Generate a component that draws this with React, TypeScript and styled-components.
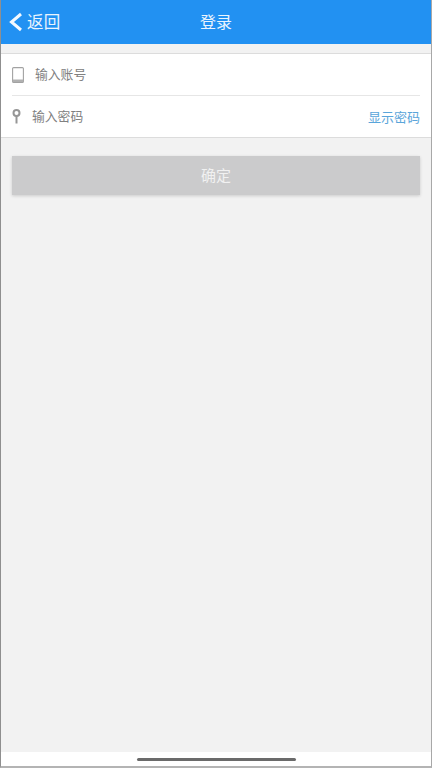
import React from "react";
import styled, { createGlobalStyle } from "styled-components";

const Global = createGlobalStyle`
  html, body { margin: 0; padding: 0; background: #fff; }
  #root { width: 432px; height: 768px; }
  * { box-sizing: border-box; }
`;

const Screen = styled.div`
  width: 432px;
  height: 768px;
  display: flex;
  flex-direction: column;
  overflow: hidden;
  background: #f2f2f2;
  border-left: 1px solid #8f8f8f;
  border-right: 1px solid #a8a8a8;
  border-bottom: 2px solid #b4b4b4;
  font-family: "Noto Sans CJK SC", "Liberation Sans", sans-serif;
`;

const Header = styled.header`
  height: 44px;
  flex: none;
  display: grid;
  grid-template-columns: 1fr auto 1fr;
  align-items: center;
  background: #2291f2;
  color: #eaf4fe;
  padding: 0 7px;
`;

const Back = styled.div`
  display: flex;
  align-items: center;
  gap: 3px;
  font-size: 16.5px;
  letter-spacing: 0.2px;
  line-height: 1;
`;

const BackLabel = styled.span`
  padding-bottom: 2px;
`;

const Title = styled.div`
  font-size: 16px;
  line-height: 1;
  padding-bottom: 2px;
`;

const Panel = styled.section`
  margin-top: 9px;
  flex: none;
  height: 85px;
  background: #fff;
  border-top: 1px solid #dcdcdc;
  border-bottom: 1px solid #dcdcdc;
  padding: 0 11px;
  display: flex;
  flex-direction: column;
`;

const Row = styled.div<{ $divided?: boolean; $gap: number }>`
  height: ${(p) => (p.$divided ? 42 : 41)}px;
  flex: none;
  display: flex;
  align-items: center;
  gap: ${(p) => p.$gap}px;
  border-bottom: ${(p) => (p.$divided ? "1px solid #e6e6e6" : "none")};
`;

const Placeholder = styled.span`
  font-size: 12.8px;
  color: #808080;
  flex: 1;
  line-height: 1;
  padding-bottom: 1px;
`;

const ShowLink = styled.span`
  font-size: 13px;
  color: #5aa5da;
  line-height: 1;
  padding-bottom: 1px;
`;

const Confirm = styled.div`
  margin: 18px 11px 0;
  height: 39px;
  flex: none;
  display: flex;
  align-items: center;
  justify-content: center;
  background: #cbcbcc;
  box-shadow: 0 1px 3px rgba(0, 0, 0, 0.16);
  color: #f1f1f1;
  font-size: 15px;
  line-height: 1;
  padding-bottom: 3px;
`;

const Spacer = styled.div`
  flex: 1;
`;

const HomeArea = styled.footer`
  height: 14px;
  flex: none;
  background: #fff;
  display: flex;
  justify-content: center;
  padding-top: 6px;
`;

const HomeBar = styled.div`
  width: 159px;
  height: 3px;
  border-radius: 2px;
  background: #6a6a6a;
`;

const App = () => (
  <>
    <Global />
    <Screen>
      <Header>
        <Back>
          <svg width="16" height="20" viewBox="0 0 16 20" fill="none">
            <path d="M13 2 L3.5 10 L13 18" stroke="#f4f9ff" strokeWidth="3" />
          </svg>
          <BackLabel>返回</BackLabel>
        </Back>
        <Title>登录</Title>
      </Header>
      <Panel>
        <Row $divided $gap={11}>
          <svg width="12" height="16" viewBox="0 0 12 16" fill="none">
            <rect x="0.6" y="0.6" width="10.8" height="14.8" rx="1" stroke="#a2a2a2" strokeWidth="1.1" />
            <path d="M1 12.5 H11 V15 H1 Z" fill="#b0b0b0" />
          </svg>
          <Placeholder>输入账号</Placeholder>
        </Row>
        <Row $gap={11}>
          <svg width="9" height="16" viewBox="0 0 9 16" fill="none">
            <circle cx="4.5" cy="4" r="3" stroke="#969696" strokeWidth="2" />
            <path d="M4.5 7 V14.5" stroke="#969696" strokeWidth="2" />
          </svg>
          <Placeholder>输入密码</Placeholder>
          <ShowLink>显示密码</ShowLink>
        </Row>
      </Panel>
      <Confirm>确定</Confirm>
      <Spacer />
      <HomeArea>
        <HomeBar />
      </HomeArea>
    </Screen>
  </>
);

export default App;
